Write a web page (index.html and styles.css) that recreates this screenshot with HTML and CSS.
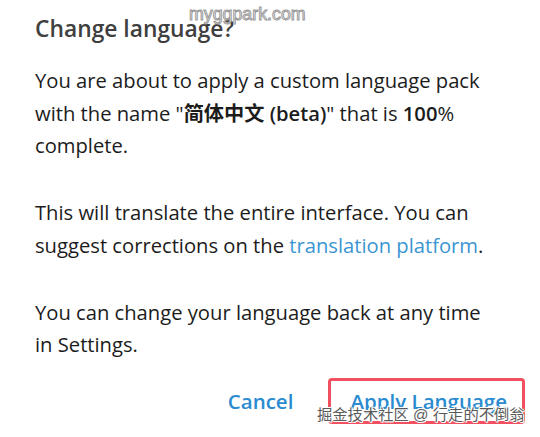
FILE: index.html
```html
<!DOCTYPE html>
<html lang="en">
<head>
<meta charset="utf-8">
<link rel="stylesheet" href="styles.css">
</head>
<body>
<div class="dialog">
  <h1 class="title">Change language?</h1>
  <p class="para">You are about to apply a custom language pack with the name "<b class="cjk">简体中文 (beta)</b>" that is <b>100</b>% complete.</p>
  <p class="para">This will translate the entire interface. You can suggest corrections on the <a class="link" href="#">translation platform</a>.</p>
  <p class="para">You can change your language back at any time in Settings.</p>
  <div class="actions">
    <button class="btn">Cancel</button>
    <button class="btn btn-apply">Apply Language</button>
  </div>
  <div class="wm wm-top">myggpark.com</div>
  <div class="wm wm-bottom">掘金技术社区 @ 行走的不倒翁</div>
</div>
</body>
</html>
```
FILE: styles.css
```css
html, body {
  margin: 0;
  padding: 0;
  background: #ffffff;
}
.dialog {
  position: relative;
  width: 540px;
  height: 437px;
  box-sizing: border-box;
  padding: 14px 0 0 35px;
  font-family: "Open Sans", "Noto Sans CJK SC", sans-serif;
  color: #1c1c1c;
}
.title {
  margin: 0 0 20px;
  font-size: 22.8px;
  line-height: 30px;
  font-weight: 600;
  color: #3f3f3f;
}
.para {
  margin: 0 0 34.5px;
  font-size: 20.2px;
  line-height: 32.5px;
  width: 462px;
}
.para b {
  font-weight: 600;
}
.link {
  color: #3a96d2;
  text-decoration: none;
}
.actions {
  display: flex;
  justify-content: flex-end;
  align-items: center;
  gap: 35px;
  padding-right: 15px;
  margin-top: -17px;
}
.btn {
  font-family: "Open Sans", sans-serif;
  font-size: 20.5px;
  font-weight: 600;
  line-height: 38px;
  color: #2b8bd0;
  background: none;
  border: 3px solid transparent;
  padding: 1px 15px 1px 19px;
  margin: 0;
  border-radius: 4px;
}
.btn:first-child {
  padding: 1px 0;
  border: 0;
}
.btn-apply {
  border-color: #f0505f;
}
.wm {
  position: absolute;
  font-family: "Liberation Sans", "Noto Sans CJK SC", sans-serif;
}
.wm-top {
  left: 189px;
  top: 5px;
  font-size: 17.8px;
  line-height: 18px;
  color: #ffffff;
  -webkit-text-stroke: 1px #9a9a9a;
}
.wm-bottom {
  left: 317px;
  top: 407px;
  font-size: 15.3px;
  line-height: 16px;
  color: #5a5a5a;
  text-shadow: -1px 0 #fff, 1px 0 #fff, 0 -1px #fff, 0 1px #fff, 1px 1px #fff, -1px -1px #fff;
}
```
